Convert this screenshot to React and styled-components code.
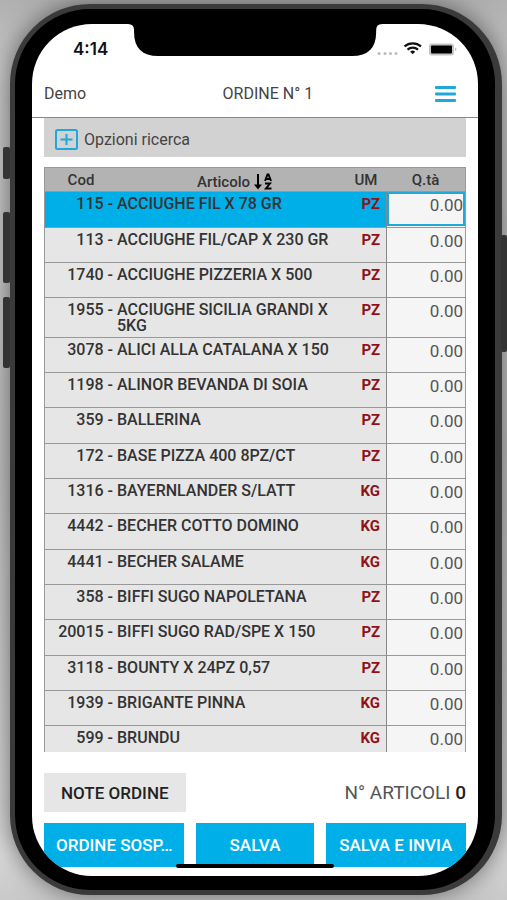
import React, { useState } from "react";
import styled, { createGlobalStyle } from "styled-components";

const GlobalStyle = createGlobalStyle`
  * {
    box-sizing: border-box;
  }

  body {
    margin: 0;
    font-family: Roboto, "Liberation Sans", sans-serif;
    color: #333;
  }
`;

const Page = styled.div`
  position: relative;
  display: flex;
  height: 100vh;
  min-height: 600px;
  padding: 4px 5px 5px 10px;
  overflow: hidden;
  background: linear-gradient(
    180deg,
    #b0b0b0 0,
    #c8c8c8 8%,
    #c0c0c0 50%,
    #d8d8d8 95%,
    #c8c8c8 100%
  );
`;

const SideButton = styled.span`
  position: absolute;
  z-index: 1;
  top: ${(props) => props.$top};
  left: ${(props) => (props.$right ? "auto" : "3px")};
  right: ${(props) => (props.$right ? "0" : "auto")};
  width: ${(props) => (props.$right ? "6px" : "7px")};
  height: ${(props) => props.$height};
  border-radius: 2px;
  background: #333;
`;

const Phone = styled.div`
  position: relative;
  flex: 1;
  display: flex;
  min-width: 0;
  padding: 15px 17px 14px;
  border: 5px solid #3a3a3a;
  border-width: 5px 7px 5px 5px;
  border-radius: 80px;
  background: #000;
  box-shadow: 0 0 24px rgba(0, 0, 0, 0.5);
`;

const Screen = styled.div`
  position: relative;
  flex: 1;
  display: flex;
  flex-direction: column;
  min-width: 0;
  overflow: hidden;
  border-radius: 60px;
  background: #fff;
`;

const StatusBar = styled.div`
  display: grid;
  grid-template-columns: minmax(0, 1fr) 57% minmax(0, 1fr);
  height: 46px;
  flex-shrink: 0;
`;

const Time = styled.div`
  padding: 15px 0 0 41px;
  font-family: Inter, "Liberation Sans", sans-serif;
  font-size: 17px;
  line-height: 20px;
  font-weight: 600;
  color: #111;
`;

const Notch = styled.svg`
  width: 100%;
  height: 32px;
`;

const StatusIcons = styled.div`
  display: flex;
  justify-content: flex-end;
  padding: 17px 21px 0 0;

  svg {
    flex-shrink: 0;
  }
`;

const Toolbar = styled.header`
  display: grid;
  grid-template-columns: 5fr auto 4fr;
  align-items: center;
  height: 48px;
  flex-shrink: 0;
  padding: 0 22px 0 12px;
  border-bottom: 1px solid #888;
  font-size: 16px;
  color: #444;
`;

const Title = styled.h1`
  margin: 0;
  font-size: 16px;
  font-weight: 400;
`;

const MenuButton = styled.button`
  justify-self: end;
  display: flex;
  padding: 0;
  border: 0;
  background: none;
  color: #1fa8dc;
`;

const Content = styled.main`
  flex: 1;
  display: flex;
  flex-direction: column;
  min-height: 0;
  padding: 0 12px 9px;
`;

const SearchOptions = styled.button`
  display: flex;
  align-items: center;
  gap: 6px;
  height: 39px;
  flex-shrink: 0;
  margin-bottom: 10px;
  padding: 4px 11px 0;
  border: 0;
  background: #d2d2d2;
  font-family: inherit;
  font-size: 16px;
  color: #444;
`;

const TableWrap = styled.div`
  flex: 1;
  min-height: 0;
  overflow: hidden;
`;

const Table = styled.table`
  width: 100%;
  table-layout: fixed;
  border-collapse: separate;
  border-spacing: 0;
  border: 1px solid #999;
  border-bottom: 0;
  font-size: 16px;
  line-height: 16px;
`;

const HeadCell = styled.th`
  width: ${(props) => props.$width || "auto"};
  height: 24px;
  padding: 0;
  border-bottom: 1px solid #999;
  background: #b3b3b3;
  font-size: 15px;
  font-weight: 500;
  text-align: center;
`;

const SortLabel = styled.span`
  display: flex;
  align-items: center;
  justify-content: center;
  gap: 4px;
  padding: 4px 0 0 6px;
`;

const Row = styled.tr`
  height: 35px;
  background: ${(props) => (props.$active ? "#00aee8" : "#e6e6e6")};
  cursor: pointer;

  &:nth-child(3n + 1) {
    height: 36px;
  }
`;

const Cell = styled.td`
  padding: 4px 0 3px;
  border-bottom: 1px solid #999;
  font-weight: 500;
  vertical-align: top;
`;

const CodeCell = styled(Cell)`
  text-align: right;
  white-space: pre;
`;

const UnitCell = styled(Cell)`
  padding-right: 6px;
  font-size: 15px;
  font-weight: 700;
  text-align: right;
  color: #8f1218;
`;

const QtyCell = styled(Cell)`
  padding: 0;
  border-left: 1px solid #888;
  background: #f5f5f5;
`;

const QtyInput = styled.input`
  display: block;
  width: 100%;
  height: 34px;
  padding: 0 ${(props) => (props.$active ? "0" : "2px")} 8px 0;
  border: ${(props) => (props.$active ? "2px solid #1fa8dc" : "0")};
  outline: 0;
  background: #f5f5f5;
  font-family: inherit;
  font-size: 17px;
  text-align: right;
  color: #555;
`;

const Summary = styled.div`
  display: flex;
  align-items: center;
  justify-content: space-between;
  margin: 21px 0 11px;
  font-size: 19px;
  color: #555;

  strong {
    font-weight: 500;
    color: #222;
  }
`;

const NoteButton = styled.button`
  height: 39px;
  padding: 0 17px;
  border: 0;
  background: #e6e6e6;
  font-family: inherit;
  font-size: 17px;
  font-weight: 500;
  color: #222;
`;

const Actions = styled.div`
  display: flex;
  gap: 12px;
`;

const ActionButton = styled.button`
  flex: ${(props) => props.$grow} 1 0;
  min-width: 0;
  height: 44px;
  padding: 0;
  border: 0;
  background: #00aee8;
  font-family: inherit;
  font-size: 17px;
  font-weight: 500;
  white-space: nowrap;
  color: #fff;
`;

const HomeIndicator = styled.span`
  position: absolute;
  bottom: 8px;
  left: 50%;
  width: 158px;
  height: 4px;
  margin-left: -79px;
  border-radius: 2px;
  background: #000;
`;

const articles = [
  { code: 115, name: "ACCIUGHE FIL X 78 GR", unit: "PZ" },
  { code: 113, name: "ACCIUGHE FIL/CAP X 230 GR", unit: "PZ" },
  { code: 1740, name: "ACCIUGHE PIZZERIA X 500", unit: "PZ" },
  { code: 1955, name: "ACCIUGHE SICILIA GRANDI X 5KG", unit: "PZ" },
  { code: 3078, name: "ALICI ALLA CATALANA X 150", unit: "PZ" },
  { code: 1198, name: "ALINOR BEVANDA DI SOIA", unit: "PZ" },
  { code: 359, name: "BALLERINA", unit: "PZ" },
  { code: 172, name: "BASE PIZZA 400 8PZ/CT", unit: "PZ" },
  { code: 1316, name: "BAYERNLANDER S/LATT", unit: "KG" },
  { code: 4442, name: "BECHER COTTO DOMINO", unit: "KG" },
  { code: 4441, name: "BECHER SALAME", unit: "KG" },
  { code: 358, name: "BIFFI SUGO NAPOLETANA", unit: "PZ" },
  { code: 20015, name: "BIFFI SUGO RAD/SPE X 150", unit: "PZ" },
  { code: 3118, name: "BOUNTY X 24PZ 0,57", unit: "PZ" },
  { code: 1939, name: "BRIGANTE PINNA", unit: "KG" },
  { code: 599, name: "BRUNDU", unit: "KG" },
];

const SignalIcons = () => (
  <svg width="80" height="16" viewBox="0 0 80 16" aria-hidden="true">
    <g fill="#bbb">
      <circle cx="2" cy="12.5" r="1.5" />
      <circle cx="8" cy="12.5" r="1.5" />
      <circle cx="13.5" cy="12.5" r="1.5" />
      <circle cx="19" cy="12.5" r="1.5" />
    </g>
    <g fill="none" stroke="#111" strokeWidth="2.2">
      <path d="M27.5 5.4a12.5 12.5 0 0 1 16.5 0" />
      <path d="M30.5 8.6a8 8 0 0 1 10.5 0" />
    </g>
    <path d="M35.700 13.200l-2.500-2.500a3.600 3.600 0 0 1 5 0z" fill="#111" />
    <rect x="52" y="2.5" width="25" height="12" rx="3" fill="#c4c4c4" />
    <rect x="54" y="4.5" width="21" height="8" rx="1" fill="#000" />
    <path d="M78 6.5c2 .5 2 3 0 3.5z" fill="#bbb" />
  </svg>
);

const MenuIcon = () => (
  <svg width="21" height="16" viewBox="0 0 21 16" aria-hidden="true">
    <g fill="currentColor">
      <rect width="21" height="3" rx="1" />
      <rect y="6.5" width="21" height="3" rx="1" />
      <rect y="13" width="21" height="3" rx="1" />
    </g>
  </svg>
);

const PlusIcon = () => (
  <svg width="23" height="21" viewBox="0 0 23 21" aria-hidden="true">
    <g fill="none" stroke="#1fa8dc" strokeWidth="2">
      <rect x="1" y="1" width="21" height="19" rx="1.5" />
      <path d="M5.5 10.5h12M11.5 5v11" />
    </g>
  </svg>
);

const SortIcon = () => (
  <svg width="18" height="18" viewBox="0 0 18 18" aria-hidden="true">
    <g fill="none" stroke="#000" strokeWidth="2">
      <path d="M4 1v12" />
      <path d="M11 8l2.5-6.5h1L17 8M12 6h4.5" />
      <path d="M11 10.5h5l-4 5h5.500" />
    </g>
    <path d="M0 11.5h8l-4 5z" fill="#000" />
  </svg>
);

const App = () => {
  const [selected, setSelected] = useState(115);

  return (
    <>
      <GlobalStyle />
      <Page>
        <SideButton $top="147px" $height="32px" />
        <SideButton $top="212px" $height="71px" />
        <SideButton $top="297px" $height="71px" />
        <SideButton $top="235px" $height="117px" $right />
        <Phone>
          <Screen>
            <StatusBar>
              <Time>4:14</Time>
              <Notch viewBox="0 0 252 32" preserveAspectRatio="none">
                <path d="M0 0h252q-6 0-6 6v2q0 24-24 24H30q-24 0-24-24V6q0-6-6-6z" />
              </Notch>
              <StatusIcons>
                <SignalIcons />
              </StatusIcons>
            </StatusBar>
            <Toolbar>
              <span>Demo</span>
              <Title>ORDINE N° 1</Title>
              <MenuButton type="button" aria-label="Menu">
                <MenuIcon />
              </MenuButton>
            </Toolbar>
            <Content>
              <SearchOptions type="button">
                <PlusIcon />
                Opzioni ricerca
              </SearchOptions>
              <TableWrap>
                <Table>
                  <thead>
                    <tr>
                      <HeadCell $width="72px">Cod</HeadCell>
                      <HeadCell>
                        <SortLabel>
                          Articolo
                          <SortIcon />
                        </SortLabel>
                      </HeadCell>
                      <HeadCell $width="40px">UM</HeadCell>
                      <HeadCell $width="79px">Q.tà</HeadCell>
                    </tr>
                  </thead>
                  <tbody>
                    {articles.map(({ code, name, unit }) => (
                      <Row
                        key={code}
                        $active={code === selected}
                        onClick={() => setSelected(code)}
                      >
                        <CodeCell>{code} - </CodeCell>
                        <Cell>{name}</Cell>
                        <UnitCell>{unit}</UnitCell>
                        <QtyCell>
                          <QtyInput
                            $active={code === selected}
                            aria-label={`Quantità ${name}`}
                            defaultValue="0.00"
                          />
                        </QtyCell>
                      </Row>
                    ))}
                  </tbody>
                </Table>
              </TableWrap>
              <Summary>
                <NoteButton type="button">NOTE ORDINE</NoteButton>
                <span>
                  N° ARTICOLI <strong>0</strong>
                </span>
              </Summary>
              <Actions>
                <ActionButton type="button" $grow={6}>
                  ORDINE SOSP…
                </ActionButton>
                <ActionButton type="button" $grow={5}>
                  SALVA
                </ActionButton>
                <ActionButton type="button" $grow={6}>
                  SALVA E INVIA
                </ActionButton>
              </Actions>
            </Content>
            <HomeIndicator />
          </Screen>
        </Phone>
      </Page>
    </>
  );
};

export default App;
